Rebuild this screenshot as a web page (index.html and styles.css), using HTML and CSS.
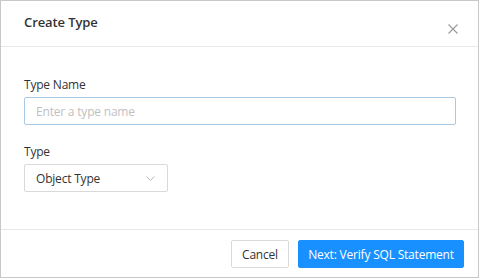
FILE: index.html
```html
<!DOCTYPE html>
<html lang="en">
<head>
<meta charset="UTF-8">
<meta name="viewport" content="width=device-width, initial-scale=1.0">
<title>Create Type</title>
<link rel="stylesheet" href="styles.css">
</head>
<body>
<div class="dialog">
    <div class="dialog-header">
        <span class="dialog-title">Create Type</span>
        <button class="close-btn" aria-label="Close">
            <svg width="10" height="10" viewBox="0 0 10 10"><path d="M0.5 0.5 L9.5 9.5 M9.5 0.5 L0.5 9.5" stroke="#999" stroke-width="1.1" fill="none"/></svg>
        </button>
    </div>

    <div class="dialog-body">
        <div class="form-item">
            <label class="form-label" for="typeName">Type Name</label>
            <input type="text" id="typeName" class="text-input" placeholder="Enter a type name"/>
        </div>
        <div class="form-item">
            <label class="form-label">Type</label>
            <div class="select">
                <span>Object Type</span>
                <svg width="9" height="5" viewBox="0 0 9 5"><path d="M0.5 0.5 L4.5 4.5 L8.5 0.5" stroke="#bbb" stroke-width="1" fill="none"/></svg>
            </div>
        </div>
    </div>

    <div class="dialog-footer">
        <button class="btn btn-cancel">Cancel</button>
        <button class="btn btn-primary">Next: Verify SQL Statement</button>
    </div>
</div>
</body>
</html>
```

FILE: styles.css
```css
body{
    margin: 0;
    font-family: "Open Sans", "Noto Sans", sans-serif;
    color: #333;
    background-color: #fff;
}
.dialog{
    height: 278px;
    box-sizing: border-box;
    border: 1px solid #c8c8c8;
    display: flex;
    flex-direction: column;
}
.dialog-header{
    height: 45px;
    border-bottom: 1px solid #e8e8e8;
    display: flex;
    align-items: center;
    justify-content: space-between;
    padding: 0 20px 0 23px;
}
.dialog-title{
    font-size: 13px;
    font-weight: 600;
    letter-spacing: -0.1px;
    margin-top: -3px;
}
.close-btn{
    border: none;
    background: none;
    padding: 0;
    margin-top: 10px;
    width: 10px;
    height: 10px;
    display: flex;
}
.dialog-body{
    flex: 1;
    padding: 28px 22px 0 23px;
}
.form-item{
    margin-bottom: 17px;
}
.form-label{
    display: block;
    font-size: 12px;
    letter-spacing: -0.2px;
    line-height: 20px;
    margin-bottom: 2px;
}
.text-input{
    display: block;
    width: 100%;
    height: 28px;
    box-sizing: border-box;
    border: 1px solid #a9c9e6;
    border-radius: 2px;
    padding: 0 11px;
    font-family: inherit;
    font-size: 12px;
    letter-spacing: -0.2px;
    color: #333;
    outline: none;
}
.text-input::placeholder{
    color: #bfbfbf;
}
.select{
    width: 144px;
    height: 28px;
    box-sizing: border-box;
    border: 1px solid #d9d9d9;
    border-radius: 2px;
    padding: 0 12px 0 11px;
    display: flex;
    align-items: center;
    justify-content: space-between;
    font-size: 12px;
    letter-spacing: -0.2px;
}
.dialog-footer{
    border-top: 1px solid #e8e8e8;
    padding: 10px 14px 9px;
    display: flex;
    justify-content: flex-end;
    gap: 9px;
}
.btn{
    height: 28px;
    box-sizing: border-box;
    border: 1px solid #d9d9d9;
    border-radius: 2px;
    background-color: #fff;
    color: #333;
    font-family: inherit;
    font-size: 12px;
    letter-spacing: -0.2px;
    padding: 0;
}
.btn-cancel{
    width: 58px;
}
.btn-primary{
    width: 166px;
    background-color: #1890ff;
    border-color: #1890ff;
    color: #fff;
}
```
